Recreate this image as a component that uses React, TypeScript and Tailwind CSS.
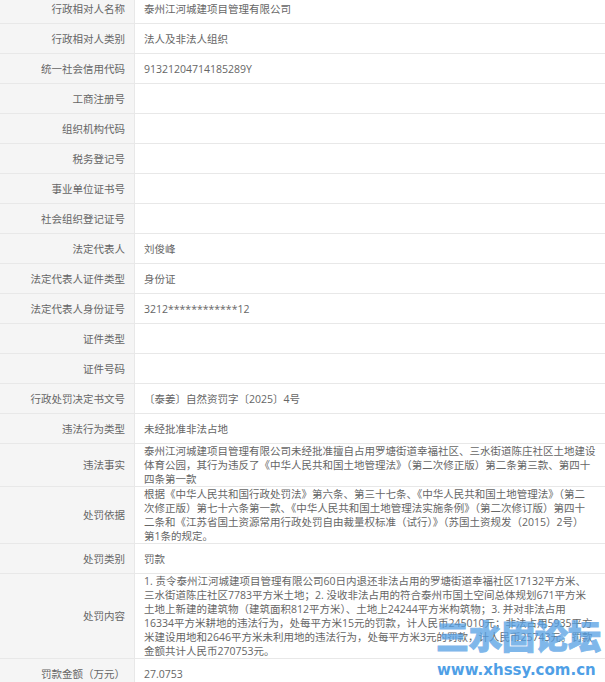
import * as React from 'react';

const font = { fontFamily: '"Open Sans", "Noto Sans CJK SC", sans-serif' };

const rows: { label: string; lines?: string[]; h: string }[] = [
    { label: "行政相对人名称", lines: ["泰州江河城建项目管理有限公司"], h: "h-[30px]" },
    { label: "行政相对人类别", lines: ["法人及非法人组织"], h: "h-[30px]" },
    { label: "统一社会信用代码", lines: ["91321204714185289Y"], h: "h-[30px]" },
    { label: "工商注册号", h: "h-[30px]" },
    { label: "组织机构代码", h: "h-[30px]" },
    { label: "税务登记号", h: "h-[30px]" },
    { label: "事业单位证书号", h: "h-[30px]" },
    { label: "社会组织登记证号", h: "h-[30px]" },
    { label: "法定代表人", lines: ["刘俊峰"], h: "h-[30px]" },
    { label: "法定代表人证件类型", lines: ["身份证"], h: "h-[30px]" },
    { label: "法定代表人身份证号", lines: ["3212************12"], h: "h-[30px]" },
    { label: "证件类型", h: "h-[30px]" },
    { label: "证件号码", h: "h-[30px]" },
    { label: "行政处罚决定书文号", lines: ["〔泰姜〕自然资罚字〔2025〕4号"], h: "h-[30px]" },
    { label: "违法行为类型", lines: ["未经批准非法占地"], h: "h-[30px]" },
    {
        label: "违法事实",
        lines: [
            "泰州江河城建项目管理有限公司未经批准擅自占用罗塘街道幸福社区、三水街道陈庄社区土地建设",
            "体育公园，其行为违反了《中华人民共和国土地管理法》（第二次修正版）第二条第三款、第四十",
            "四条第一款",
        ],
        h: "h-[43px]",
    },
    {
        label: "处罚依据",
        lines: [
            "根据《中华人民共和国行政处罚法》第六条、第三十七条、《中华人民共和国土地管理法》（第二",
            "次修正版）第七十六条第一款、《中华人民共和国土地管理法实施条例》（第二次修订版）第四十",
            "二条和《江苏省国土资源常用行政处罚自由裁量权标准（试行）》（苏国土资规发（2015）2号）",
            "第1条的规定。",
        ],
        h: "h-[57px]",
    },
    { label: "处罚类别", lines: ["罚款"], h: "h-[30px]" },
    {
        label: "处罚内容",
        lines: [
            "1. 责令泰州江河城建项目管理有限公司60日内退还非法占用的罗塘街道幸福社区17132平方米、",
            "三水街道陈庄社区7783平方米土地；2. 没收非法占用的符合泰州市国土空间总体规划671平方米",
            "土地上新建的建筑物（建筑面积812平方米）、土地上24244平方米构筑物；3. 并对非法占用",
            "16334平方米耕地的违法行为，处每平方米15元的罚款，计人民币245010元；非法占用5935平方",
            "米建设用地和2646平方米未利用地的违法行为，处每平方米3元的罚款，计人民币25743元。罚款",
            "金额共计人民币270753元。",
        ],
        h: "h-[85px]",
    },
    { label: "罚款金额（万元）", lines: ["27.0753"], h: "h-[30px]" },
];

export default function App() {
    return (
        <div className="relative h-[682px] w-[605px] overflow-hidden bg-white text-[10.5px] leading-[14px] text-[#666]" style={font}>
            <div className="-mt-[6px] flex flex-col">
                {rows.map((row) => (
                    <div key={row.label} className={`flex shrink-0 border-b border-[#e8e8e8] ${row.h}`}>
                        <div className="flex w-[135px] shrink-0 items-center justify-end border-r border-[#e8e8e8] bg-[#f5f5f5] pr-[9px]">
                            {row.label}
                        </div>
                        <div className="flex flex-1 flex-col justify-center whitespace-nowrap pl-[9px]">
                            {row.lines?.map((line) => <div key={line}>{line}</div>)}
                        </div>
                    </div>
                ))}
            </div>

            {/* watermark */}
            <div className="absolute left-[436px] top-[616px] text-[33px] font-black leading-[38px] whitespace-nowrap text-[#55a0e4] opacity-75 [-webkit-text-stroke:1px_#55a0e4]" style={{ fontFamily: '"Noto Sans CJK SC", sans-serif' }}>
                三水固论坛
            </div>
            <div
                className="absolute left-[437px] top-[660px] text-[15px] font-bold leading-[20px] whitespace-nowrap text-[#4f9fe6]"
                style={{ fontFamily: '"DejaVu Sans", sans-serif' }}
            >
                www.xhssy.com.cn
            </div>
        </div>
    );
}
